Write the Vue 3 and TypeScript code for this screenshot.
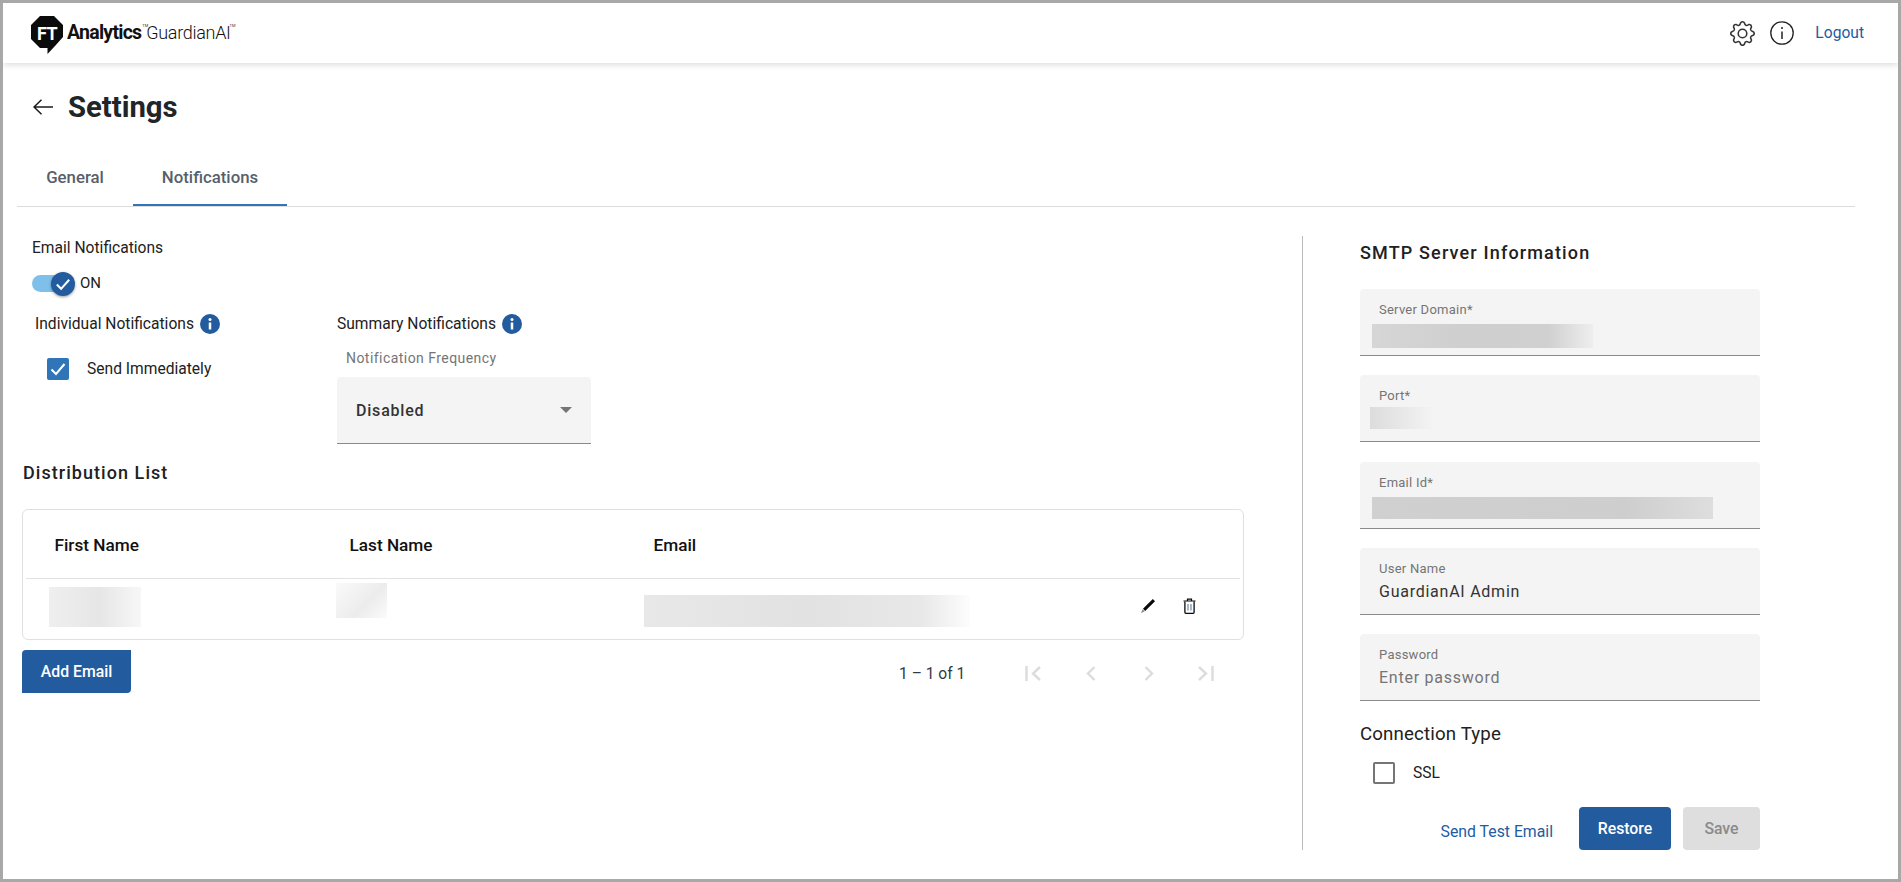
<script setup lang="ts">
interface Field {
  label: string
  value?: string
  placeholder?: string
  blur?: 'domain' | 'port' | 'email'
}

const fields: Field[] = [
  { label: 'Server Domain*', blur: 'domain' },
  { label: 'Port*', blur: 'port' },
  { label: 'Email Id*', blur: 'email' },
  { label: 'User Name', value: 'GuardianAI Admin' },
  { label: 'Password', placeholder: 'Enter password' },
]
</script>

<template>
  <div class="frame">
    <header class="topbar">
      <div class="brand">
        <svg class="logo" viewBox="0 0 32 38" width="32" height="38" aria-hidden="true">
          <path d="M9 0H23L32 9V21L24 30L16.500 38V32H9L0 23V9Z" fill="#0b0b0b" />
          <text x="16" y="23.500" text-anchor="middle" class="logo-ft">FT</text>
        </svg>
        <span class="brand-a">Analytics</span><span class="tm">TM</span>
        <span class="brand-g">GuardianAI</span><span class="tm tm-last">TM</span>
      </div>
      <div class="top-actions">
        <svg class="gear" viewBox="0 0 16 16" width="25" height="25" fill="#333" aria-hidden="true">
          <path d="M8 4.754a3.246 3.246 0 1 0 0 6.492 3.246 3.246 0 0 0 0-6.492zM5.754 8a2.246 2.246 0 1 1 4.492 0 2.246 2.246 0 0 1-4.492 0z" />
          <path d="M9.796 1.343c-.527-1.79-3.065-1.79-3.592 0l-.094.319a.873.873 0 0 1-1.255.52l-.292-.16c-1.64-.892-3.433.902-2.54 2.541l.159.292a.873.873 0 0 1-.52 1.255l-.319.094c-1.79.527-1.79 3.065 0 3.592l.319.094a.873.873 0 0 1 .52 1.255l-.16.292c-.892 1.64.901 3.434 2.541 2.54l.292-.159a.873.873 0 0 1 1.255.52l.094.319c.527 1.79 3.065 1.79 3.592 0l.094-.319a.873.873 0 0 1 1.255-.52l.292.16c1.64.893 3.434-.902 2.54-2.541l-.159-.292a.873.873 0 0 1 .52-1.255l.319-.094c1.79-.527 1.79-3.065 0-3.592l-.319-.094a.873.873 0 0 1-.52-1.255l.16-.292c.893-1.64-.902-3.433-2.541-2.54l-.292.159a.873.873 0 0 1-1.255-.52l-.094-.319zm-2.633.283c.246-.835 1.428-.835 1.674 0l.094.319a1.873 1.873 0 0 0 2.693 1.115l.291-.16c.764-.415 1.6.42 1.184 1.185l-.159.292a1.873 1.873 0 0 0 1.116 2.692l.318.094c.835.246.835 1.428 0 1.674l-.319.094a1.873 1.873 0 0 0-1.115 2.693l.16.291c.415.764-.42 1.6-1.185 1.184l-.291-.159a1.873 1.873 0 0 0-2.693 1.116l-.094.318c-.246.835-1.428.835-1.674 0l-.094-.319a1.873 1.873 0 0 0-2.692-1.115l-.292.16c-.764.415-1.6-.42-1.184-1.185l.159-.291A1.873 1.873 0 0 0 1.945 8.930l-.319-.094c-.835-.246-.835-1.428 0-1.674l.319-.094A1.873 1.873 0 0 0 3.060 4.377l-.16-.292c-.415-.764.42-1.600 1.185-1.184l.292.159a1.873 1.873 0 0 0 2.692-1.115l.094-.319z" />
        </svg>
        <svg class="info" viewBox="0 0 24 24" width="24" height="24" aria-hidden="true">
          <circle cx="12" cy="12" r="11.200" fill="none" stroke="#222" stroke-width="1.300" />
          <circle cx="12" cy="7" r="1" fill="#222" />
          <path d="M12 10.500V18" stroke="#222" stroke-width="1.500" />
        </svg>
        <a class="logout">Logout</a>
      </div>
    </header>

    <div class="title-row">
      <svg viewBox="0 0 20 16" width="20" height="16" aria-hidden="true">
        <path d="M20 8H1M8.500 .7L1 8l7.500 7.300" fill="none" stroke="#1a1a1a" stroke-width="1.500" />
      </svg>
      <h1>Settings</h1>
    </div>

    <nav class="tabs">
      <div class="tab tab-general">General</div>
      <div class="tab tab-active">Notifications</div>
    </nav>

    <main class="main">
      <section class="left">
        <div class="email-title">Email Notifications</div>
        <div class="toggle-row">
          <span class="toggle">
            <span class="knob">
              <svg viewBox="0 0 16 16" width="18" height="18" aria-hidden="true">
                <path d="M2.500 8.500L6.300 12.300L13.500 4.200" fill="none" stroke="#fff" stroke-width="1.800" />
              </svg>
            </span>
          </span>
          <span class="on">ON</span>
        </div>

        <div class="notif-row">
          <div class="notif-ind">
            <div class="notif-head">
              Individual Notifications
              <svg class="i-badge" viewBox="0 0 20 20" width="20" height="20" aria-hidden="true">
                <circle cx="10" cy="10" r="10" fill="#225c9f" />
                <circle cx="10" cy="5.500" r="1.500" fill="#fff" />
                <path d="M10 8.500V15.500" stroke="#fff" stroke-width="2.500" />
              </svg>
            </div>
            <div class="check-row">
              <span class="check on-check">
                <svg viewBox="0 0 22 22" width="22" height="22" aria-hidden="true">
                  <path d="M4.500 11.500L9 16L17.500 6" fill="none" stroke="#fff" stroke-width="2" />
                </svg>
              </span>
              <span>Send Immediately</span>
            </div>
          </div>
          <div class="notif-sum">
            <div class="notif-head">
              Summary Notifications
              <svg class="i-badge" viewBox="0 0 20 20" width="20" height="20" aria-hidden="true">
                <circle cx="10" cy="10" r="10" fill="#225c9f" />
                <circle cx="10" cy="5.500" r="1.500" fill="#fff" />
                <path d="M10 8.500V15.500" stroke="#fff" stroke-width="2.500" />
              </svg>
            </div>
            <div class="freq-label">Notification Frequency</div>
            <div class="select">
              <span>Disabled</span>
              <span class="caret"></span>
            </div>
          </div>
        </div>

        <h2 class="dist">Distribution List</h2>
        <div class="card">
          <div class="row head">
            <div>First Name</div>
            <div>Last Name</div>
            <div>Email</div>
          </div>
          <div class="row body">
            <div><div class="blur blur-first"></div></div>
            <div><div class="blur blur-last"></div></div>
            <div class="email-cell">
              <div class="blur blur-mail"></div>
              <svg class="pencil" viewBox="0 0 16 16" width="16" height="16" aria-hidden="true">
                <path d="M12.800 1L15 3.200L5.200 13L3 10.800Z" fill="#0a0a0a" />
                <path d="M2.600 11.300L4.700 13.400L1 15Z" fill="#8a8a8a" />
              </svg>
              <svg class="trash" viewBox="0 0 13 16" width="13" height="16" aria-hidden="true">
                <path d="M0.500 3H12.500M4.500 3V1.200H8.500V3" fill="none" stroke="#0a0a0a" stroke-width="1.200" />
                <path d="M1.900 3.500V14.300Q1.900 15.300 2.900 15.300H10.100Q11.100 15.300 11.100 14.300V3.500" fill="none" stroke="#0a0a0a" stroke-width="1.300" />
                <path d="M5 6V12.500M8 6V12.500" stroke="#6f8aa6" stroke-width="1.200" />
              </svg>
            </div>
          </div>
        </div>

        <div class="under-card">
          <button class="btn primary add">Add Email</button>
          <div class="pager">
            <span class="range">1 – 1 of 1</span>
            <svg class="pg pg-first" viewBox="0 0 18 15" width="18" height="15" aria-hidden="true">
              <path d="M1.500 0V15M15 1L8 7.500L15 14" fill="none" stroke="#dcdcdc" stroke-width="2.400" />
            </svg>
            <svg class="pg pg-prev" viewBox="0 0 10 15" width="10" height="15" aria-hidden="true">
              <path d="M8.500 1L2 7.500L8.500 14" fill="none" stroke="#dcdcdc" stroke-width="2.400" />
            </svg>
            <svg class="pg pg-next" viewBox="0 0 10 15" width="10" height="15" aria-hidden="true">
              <path d="M1.500 1L8 7.500L1.500 14" fill="none" stroke="#dcdcdc" stroke-width="2.400" />
            </svg>
            <svg class="pg pg-last" viewBox="0 0 18 15" width="18" height="15" aria-hidden="true">
              <path d="M16.500 0V15M3 1L10 7.500L3 14" fill="none" stroke="#dcdcdc" stroke-width="2.400" />
            </svg>
          </div>
        </div>
      </section>

      <aside class="right">
        <h2 class="smtp">SMTP Server Information</h2>
        <div class="fields">
          <div v-for="f in fields" :key="f.label" class="field">
            <div class="field-label">{{ f.label }}</div>
            <div v-if="f.blur" class="blur" :class="'blur-' + f.blur"></div>
            <div v-else-if="f.value" class="field-value">{{ f.value }}</div>
            <div v-else class="field-value placeholder">{{ f.placeholder }}</div>
          </div>
        </div>
        <div class="conn">Connection Type</div>
        <div class="ssl-row">
          <span class="check off-check"></span>
          <span>SSL</span>
        </div>
        <div class="actions">
          <a class="test-link">Send Test Email</a>
          <button class="btn primary restore">Restore</button>
          <button class="btn disabled save">Save</button>
        </div>
      </aside>
    </main>
  </div>
</template>

<style>
html, body { margin: 0; padding: 0; background: #fff; }
</style>

<style scoped>
.frame {
  box-sizing: border-box;
  width: 1901px;
  height: 882px;
  border: 3px solid #a8a8a8;
  background: #fff;
  overflow: hidden;
  font-family: Roboto, "Liberation Sans", sans-serif;
  color: #212121;
  font-size: 15.600px;
}
.topbar {
  height: 60px;
  display: flex;
  align-items: center;
  justify-content: space-between;
  padding-left: 28px;
  box-shadow: 0 2px 6px rgba(0, 0, 0, .14);
}
.brand { display: flex; align-items: center; margin-top: -2px; }
.logo { margin-right: 4px; margin-top: 5px; }
.logo-ft { font: 700 18px Roboto, sans-serif; fill: #fff; letter-spacing: -0.5px; }
.brand-a { font-size: 19.500px; font-weight: 700; letter-spacing: -0.75px; color: #111; }
.brand-g { font-size: 18px; font-weight: 300; margin-left: -2px; letter-spacing: -0.3px; color: #111; }
.tm { font-size: 4px; align-self: flex-start; margin-top: 12px; margin-left: 1px; color: #333; }
.tm-last { margin-left: -1px; }
.top-actions { display: flex; align-items: center; margin-right: 34px; }
.info { margin-left: 15px; }
.logout { margin-left: 21px; font-size: 15.600px; font-weight: 400; color: #225c9f; }

.title-row { display: flex; align-items: center; gap: 15px; height: 40px; margin-top: 24px; padding-left: 30px; }
h1 { margin: 0; font-size: 29.300px; font-weight: 700; color: #212529; }

.tabs { display: flex; margin: 23px 0 0 14px; width: 1838px; border-bottom: 1px solid #ddd; height: 56px; }
.tab { box-sizing: border-box; height: 56px; line-height: 54px; font-size: 16.800px; font-weight: 500; color: #575f6b; text-align: center; }
.tab-general { width: 116px; }
.tab-active { width: 154px; border-bottom: 2px solid #2f75b8; }

.main { display: flex; align-items: flex-start; }
.left { box-sizing: border-box; width: 1299px; padding-left: 19px; }
.email-title { line-height: 20px; margin: 31px 0 0 10px; }
.toggle-row { display: flex; align-items: center; height: 24px; margin: 14px 0 0 10px; }
.toggle { position: relative; display: block; width: 43px; height: 24px; }
.toggle::before { content: ""; position: absolute; left: 0; top: 3px; width: 36px; height: 17px; border-radius: 9px; background: #7fc0ea; }
.knob { position: absolute; right: 0; top: 0; width: 24px; height: 24px; border-radius: 50%; background: #225c9f; display: flex; align-items: center; justify-content: center; box-shadow: 0 1px 3px rgba(0, 0, 0, .4); }
.on { margin-left: 5px; font-size: 15px; margin-top: -2px; }
.notif-row { display: flex; margin-top: 18px; }
.notif-ind { width: 315px; box-sizing: border-box; padding-left: 13px; }
.notif-head { display: flex; align-items: center; gap: 6px; height: 20px; }
.check-row { display: flex; align-items: center; gap: 18px; margin: 24px 0 0 12px; }
.check { box-sizing: border-box; display: block; border-radius: 2px; }
.on-check { width: 22px; height: 22px; background: #2f75b8; }
.on-check svg { display: block; }
.freq-label { margin: 14px 0 0 9px; line-height: 20px; font-size: 14px; letter-spacing: .45px; color: #757575; }
.select { box-sizing: border-box; width: 254px; height: 67px; margin-top: 9px; padding: 0 19px; background: #f4f4f4; border-bottom: 1px solid #8a8a8a; border-radius: 4px 4px 0 0; display: flex; align-items: center; justify-content: space-between; font-size: 16px; font-weight: 500; letter-spacing: .8px; color: #333; }
.caret { width: 0; height: 0; border-left: 6px solid transparent; border-right: 6px solid transparent; border-top: 6px solid #757575; }
.dist { margin: 17px 0 0 1px; line-height: 24px; font-size: 18px; font-weight: 500; letter-spacing: 1.050px; color: #212121; }

.card { box-sizing: border-box; width: 1222px; height: 131px; margin-top: 24px; border: 1px solid #e0e0e0; border-radius: 6px; padding: 0 3px; }
.row { display: grid; grid-template-columns: 295px 304px 1fr; }
.head { height: 68px; align-items: center; border-bottom: 1px solid #e2e2e2; font-size: 17.200px; font-weight: 500; color: #111; }
.head > div { padding: 1px 0 0 28.500px; }
.body { align-items: start; }
.blur { background: linear-gradient(90deg, #e4e4e4, #ddd 50%, #eee 88%, #f7f7f7); }
.blur-first { width: 92px; height: 40px; margin: 8px 0 0 23px; background: linear-gradient(90deg, #efefef, #e6e6e6 55%, #f7f7f7); }
.blur-last { width: 51px; height: 35px; margin: 4px 0 0 15px; background: linear-gradient(135deg, #fafafa, #ececec 60%, #fbfbfb); }
.email-cell { display: flex; align-items: flex-start; }
.blur-mail { width: 326px; height: 32px; margin: 16px 0 0 19px; background: linear-gradient(90deg, #e8e8e8, #e2e2e2 50%, #e8e8e8 85%, #fdfdfd); }
.pencil { margin: 19px 0 0 170px; }
.trash { margin: 19px 0 0 27px; }

.under-card { display: flex; align-items: center; margin-top: 10px; width: 1222px; height: 43px; }
.btn { border: 0; padding: 0; font-family: inherit; font-size: 15.800px; font-weight: 500; border-radius: 4px; height: 43px; }
.primary { background: #225c9f; color: #fff; }
.add { width: 109px; border-radius: 4px 0 4px 0; }
.pager { display: flex; align-items: center; margin: 4px 0 0 768px; }
.range { color: #2e3a46; font-size: 15.600px; }
.pg { display: block; }
.pg-first { margin-left: 60px; }
.pg-prev { margin-left: 43px; }
.pg-next { margin-left: 48px; }
.pg-last { margin-left: 42px; }

.right { box-sizing: border-box; width: 458px; height: 614px; margin-top: 29px; padding: 5px 0 0 57px; border-left: 1px solid #bbb; }
.smtp { margin: 0; line-height: 24px; font-size: 18px; font-weight: 500; letter-spacing: 1.150px; color: #212121; }
.fields { margin-top: 24px; display: flex; flex-direction: column; gap: 19.250px; }
.field { box-sizing: border-box; height: 67px; padding: 12px 0 0 19px; background: #f4f4f4; border-bottom: 1px solid #8a8a8a; border-radius: 4px 4px 0 0; }
.field-label { font-size: 13px; line-height: 18px; letter-spacing: .25px; color: #757575; }
.field-value { margin-top: 3px; font-size: 16px; line-height: 22px; letter-spacing: .75px; color: #333; }
.placeholder { color: #757575; }
.blur-domain { width: 221px; height: 24px; margin: 5px 0 0 -7px; background: linear-gradient(90deg, #d6d6d6, #cfcfcf 40%, #d0d0d0 80%, #eeeeee); }
.blur-port { width: 62px; height: 22px; margin: 2px 0 0 -9px; background: linear-gradient(90deg, #dcdcdc, #f3f3f3); }
.blur-email { width: 341px; height: 22px; margin: 5px 0 0 -7px; background: linear-gradient(90deg, #d0d0d0, #cecece 75%, #dedede); }
.conn { margin-top: 21px; line-height: 24px; font-size: 18.700px; color: #212121; letter-spacing: .15px; }
.ssl-row { display: flex; align-items: center; gap: 18px; margin: 16px 0 0 13px; height: 22px; }
.off-check { width: 22px; height: 22px; border: 2px solid #757575; }
.actions { display: flex; align-items: center; justify-content: flex-end; width: 400px; margin-top: 23px; }
.test-link { margin-right: 26px; font-size: 15.800px; font-weight: 400; white-space: nowrap; color: #225c9f; position: relative; top: 3px; }
.restore { width: 92px; }
.save { width: 77px; margin-left: 12px; }
.disabled { background: #dedede; color: #8a8a8a; }
</style>
